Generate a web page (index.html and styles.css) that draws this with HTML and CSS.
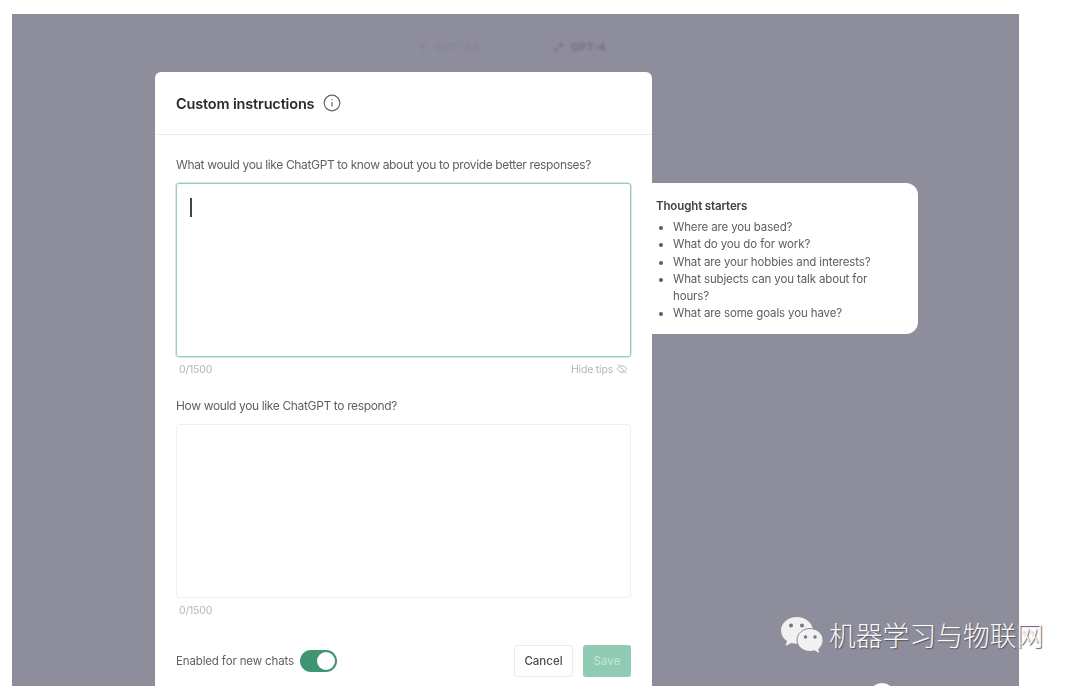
FILE: index.html
```html
<!DOCTYPE html>
<html lang="zh">
<head>
  <meta charset="UTF-8" />
  <meta name="viewport" content="width=device-width, initial-scale=1.0"/>
  <title>Custom instructions</title>
  <link rel="stylesheet" href="styles.css">
</head>
<body>
  <div class="backdrop">
    <div class="model-tabs">
      <span class="model-tab">
        <svg width="13" height="13" viewBox="0 0 16 16"><path d="M9 2 4 9h4l-1 5 5-7H8z" fill="currentColor"/></svg>
        GPT-3.5
      </span>
      <span class="model-tab tab-four">
        <svg width="13" height="13" viewBox="0 0 16 16"><path d="M11 1.500l1 2.500 2.500 1-2.500 1-1 2.500-1-2.500L7.500 5 10 4zM5 8l.8 2.200L8 11l-2.200.8L5 14l-.8-2.200L2 11l2.200-.8z" fill="currentColor"/></svg>
        GPT-4
      </span>
    </div>

    <div class="dialog-row">
      <div class="modal">
        <div class="modal-header">
          <h1>Custom instructions</h1>
          <svg class="info-icon" width="18" height="18" viewBox="0 0 18 18" fill="none" stroke="#666" stroke-width="1.200">
            <circle cx="9" cy="9" r="7.800"/>
            <path d="M9 8v4.500M9 5.200v1"/>
          </svg>
        </div>

        <div class="modal-body">
          <label class="field-label">What would you like ChatGPT to know about you to provide better responses?</label>
          <div class="field field-active"><span class="caret"></span></div>
          <div class="field-meta">
            <span>0/1500</span>
            <span class="hide-tips">Hide tips
              <svg width="12" height="12" viewBox="0 0 16 16" fill="none" stroke="#b5b5b5" stroke-width="1.300">
                <path d="M1.500 8S4 3.500 8 3.500 14.500 8 14.500 8 12 12.500 8 12.500 1.500 8 1.500 8z"/>
                <path d="M2.500 2l11 12"/>
              </svg>
            </span>
          </div>

          <label class="field-label second">How would you like ChatGPT to respond?</label>
          <div class="field"></div>
          <div class="field-meta"><span>0/1500</span></div>

          <div class="modal-footer">
            <div class="enable-row">
              <span>Enabled for new chats</span>
              <span class="toggle"><span class="knob"></span></span>
            </div>
            <div class="buttons">
              <button class="btn-cancel">Cancel</button>
              <button class="btn-save">Save</button>
            </div>
          </div>
        </div>
      </div>

      <div class="tips">
        <h2>Thought starters</h2>
        <ul>
          <li>Where are you based?</li>
          <li>What do you do for work?</li>
          <li>What are your hobbies and interests?</li>
          <li>What subjects can you talk about for hours?</li>
          <li>What are some goals you have?</li>
        </ul>
      </div>
    </div>

    <span class="help-dot"></span>
  </div>

  <div class="watermark">
    <svg width="44" height="38" viewBox="0 0 44 38">
      <path d="M17 1C8 1 1 7 1 14.500c0 4.300 2.300 8 6 10.500l-1.500 5 5.800-3c1.800.5 3.700.8 5.700.8.600 0 1.200 0 1.800-.1C18.300 17 26 12 33 13 31.500 6 25 1 17 1z" fill="#f1f1f1"/>
      <path d="M43 24c0-6.500-6-11.500-13-11.500S17 17.500 17 24s6 11.500 13 11.500c1.600 0 3.100-.3 4.500-.7L40 38l-1.300-5c2.700-2.100 4.300-5.300 4.300-9z" fill="#f1f1f1" stroke="#8e8d9c" stroke-width="1"/>
      <circle cx="11" cy="9.500" r="2" fill="#77768a"/>
      <circle cx="22" cy="9.500" r="2" fill="#77768a"/>
      <circle cx="25.500" cy="21" r="1.700" fill="#77768a"/>
      <circle cx="35" cy="21" r="1.700" fill="#77768a"/>
    </svg>
    <span class="watermark-text">机器学习与物联网</span>
  </div>
</body>
</html>
```

FILE: styles.css
```css
* {
  box-sizing: border-box;
}

html, body {
  height: 686px;
  overflow: hidden;
}

body {
  margin: 0;
  padding: 14px 61px 0 12px;
  background: #fff;
  font-family: Inter, "Liberation Sans", sans-serif;
  position: relative;
}

.backdrop {
  height: 672px;
  background: #8e8d9c;
  position: relative;
  overflow: hidden;
}

.model-tabs {
  display: flex;
  height: 58px;
  padding: 26px 0 0 405px;
  gap: 72px;
  font-size: 11px;
  font-weight: 600;
  filter: blur(1px);
}

.model-tab {
  display: flex;
  align-items: center;
  gap: 6px;
  height: 14px;
  color: #868594;
}

.tab-four {
  color: #72717f;
}

.dialog-row {
  display: flex;
  align-items: flex-start;
  padding-left: 143px;
}

.modal {
  width: 497px;
  height: 640px;
  background: #fff;
  border-radius: 6px 6px 0 0;
  filter: blur(0.4px);
}

.modal-header {
  height: 63px;
  padding: 0 21px;
  display: flex;
  align-items: center;
  gap: 9px;
  border-bottom: 1px solid #ececf0;
}

.modal-header h1 {
  margin: 0;
  font-size: 14.500px;
  font-weight: 600;
  color: #2a2a2e;
  letter-spacing: -0.16px;
}

.modal-body {
  padding: 21px 21px 0;
}

.field-label {
  display: block;
  font-size: 12px;
  line-height: 18px;
  letter-spacing: -0.36px;
  color: #5f5f68;
}

.field-label.second {
  margin-top: 21px;
}

.field {
  margin-top: 9px;
  height: 174px;
  border: 1px solid #f0f0f2;
  border-radius: 3px;
  padding: 14px 13px;
}

.field-active {
  border: 1px solid #97cfb8;
  box-shadow: 0 0 0 0.5px #a6d8c3;
}

.caret {
  display: block;
  width: 1.500px;
  height: 19px;
  background: #444;
}

.field-meta {
  display: flex;
  justify-content: space-between;
  align-items: center;
  height: 14px;
  margin-top: 5px;
  padding: 0 3px;
  font-size: 10.500px;
  letter-spacing: -0.2px;
  color: #b5b5b8;
}

.hide-tips {
  display: flex;
  align-items: center;
  gap: 3px;
}

.modal-footer {
  display: flex;
  justify-content: space-between;
  align-items: center;
  margin-top: 28px;
}

.enable-row {
  display: flex;
  align-items: center;
  gap: 6px;
  font-size: 11.500px;
  letter-spacing: -0.14px;
  color: #5f5f68;
}

.toggle {
  display: flex;
  justify-content: flex-end;
  align-items: center;
  width: 37px;
  height: 22px;
  padding: 2px;
  background: #3f9472;
  border-radius: 11px;
}

.knob {
  width: 18px;
  height: 18px;
  background: #fff;
  border-radius: 50%;
}

.buttons {
  display: flex;
  gap: 10px;
}

.buttons button {
  height: 32px;
  font-family: inherit;
  font-size: 11.500px;
  font-weight: 500;
  border-radius: 3px;
}

.btn-cancel {
  width: 59px;
  background: #fff;
  color: #4a4a52;
  border: 1px solid #ececf0;
}

.btn-save {
  width: 48px;
  background: #92cbb3;
  color: #bfe3d4;
  border: none;
}

.tips {
  width: 266px;
  height: 151px;
  margin-top: 111px;
  padding: 15px 20px 0 4px;
  background: #fff;
  border-radius: 0 12px 12px 0;
  color: #5c5c64;
  font-size: 11.500px;
  line-height: 17.200px;
  letter-spacing: -0.13px;
  filter: blur(0.4px);
}

.tips h2 {
  margin: 0 0 4px;
  font-size: 11.500px;
  font-weight: 600;
  color: #404046;
}

.tips ul {
  margin: 0;
  padding-left: 17px;
}

.help-dot {
  position: absolute;
  left: 857px;
  top: 669px;
  width: 26px;
  height: 26px;
  background: #fff;
  border-radius: 50%;
}

.watermark {
  position: absolute;
  left: 780px;
  top: 616px;
  display: flex;
  align-items: center;
  gap: 5px;
}

.watermark-text {
  font-family: "Noto Sans CJK SC", sans-serif;
  font-size: 26.800px;
  font-weight: 300;
  line-height: 38px;
  color: #fafafa;
  text-shadow: 1px 1px 1px #55555f;
}
```
